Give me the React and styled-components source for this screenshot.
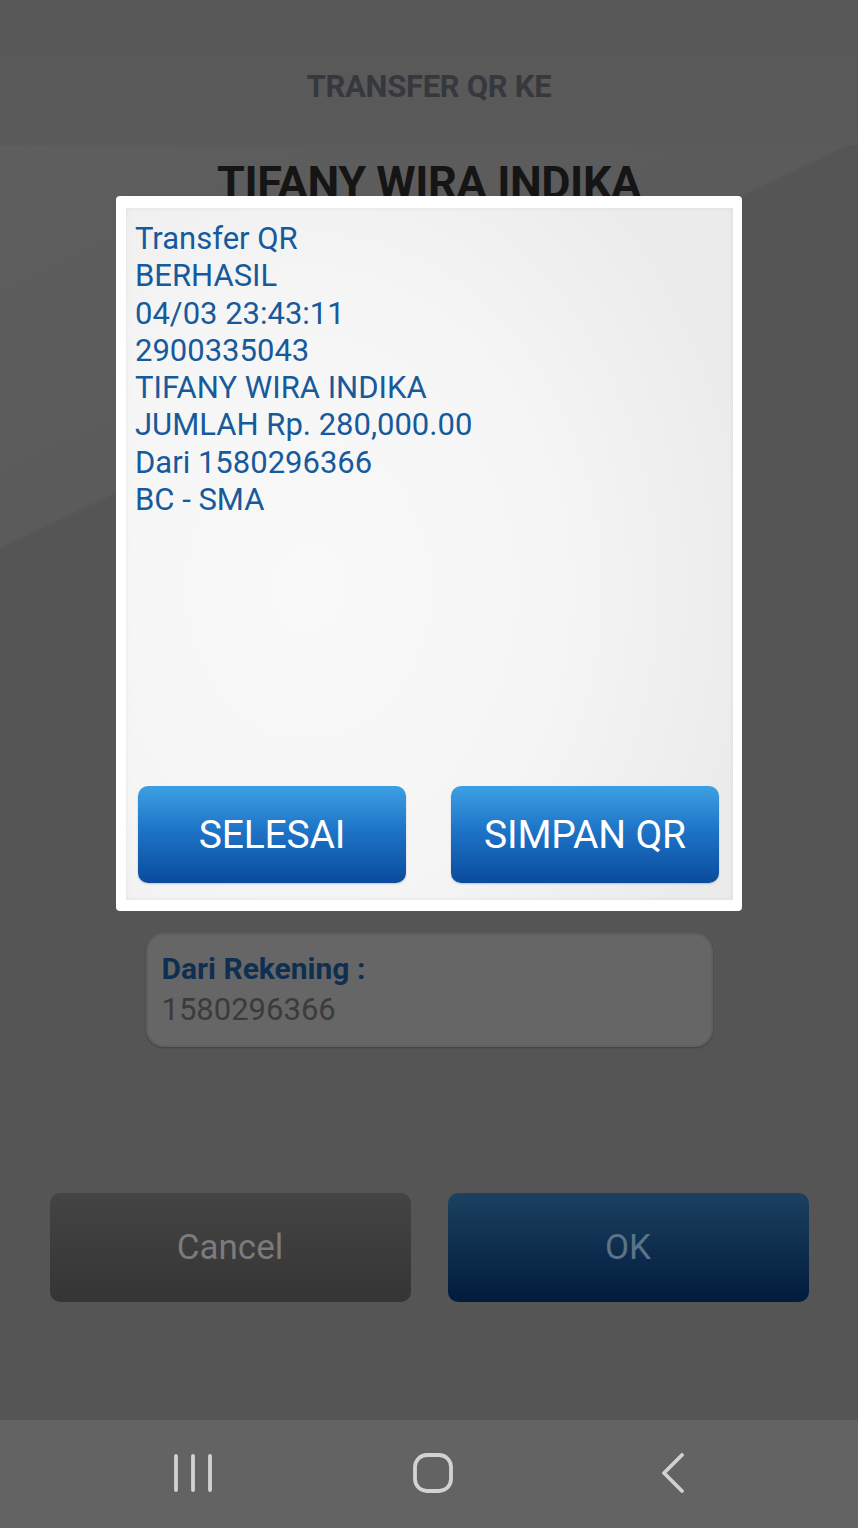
import styled, { createGlobalStyle } from "styled-components";

const GlobalStyle = createGlobalStyle`
  html, body {
    margin: 0;
    padding: 0;
    background: #575757;
  }
  * {
    box-sizing: border-box;
  }
`;

const Screen = styled.div`
  position: relative;
  width: 858px;
  height: 1528px;
  overflow: hidden;
  display: flex;
  flex-direction: column;
  font-family: Roboto, "Noto Sans", sans-serif;
  background: #575757;
`;

const Header = styled.header`
  height: 145px;
  display: flex;
  align-items: center;
  justify-content: center;
  padding-top: 28px;
  background: linear-gradient(#585858, #5a5a5a);
  color: #37383d;
  font-size: 31px;
  font-weight: 700;
  letter-spacing: -0.3px;
`;

const Body = styled.main`
  flex: 1;
  display: flex;
  flex-direction: column;
  align-items: center;
  background: linear-gradient(
    154.6deg,
    #5e5e5e 0%,
    #5b5b5b 23.8%,
    #555555 24.1%,
    #555555 100%
  );
`;

const Name = styled.h1`
  margin: 12px 0 0;
  font-size: 45px;
  font-weight: 700;
  color: #151515;
  letter-spacing: -0.4px;
  line-height: 52px;
`;

const InfoBox = styled.div`
  margin-top: 724px;
  width: 567px;
  height: 114px;
  border-radius: 18px;
  background: #666666;
  border: 2px solid #5f5f5f;
  box-shadow: 0 1px 2px rgba(0, 0, 0, 0.25);
  padding: 14px 0 0 14px;
  display: flex;
  flex-direction: column;
`;

const InfoLabel = styled.div`
  font-size: 30px;
  font-weight: 700;
  color: #0f2f52;
  line-height: 40px;
`;

const InfoValue = styled.div`
  font-size: 31px;
  color: #3b3b3b;
  line-height: 42px;
`;

const ActionRow = styled.div`
  margin-top: 146px;
  display: flex;
  gap: 37px;
`;

const ActionButton = styled.button`
  width: 361px;
  height: 109px;
  border: none;
  border-radius: 10px;
  font-family: inherit;
  font-size: 35px;
  background: ${(p) =>
    p.$primary
      ? "linear-gradient(#1c4160, #011b3d)"
      : "linear-gradient(#444444, #353535)"};
  color: ${(p) => (p.$primary ? "#5b7287" : "#7b7b7b")};
`;

const NavBar = styled.nav`
  height: 108px;
  background: #636363;
  display: grid;
  grid-template-columns: repeat(3, 240px);
  justify-content: center;
  align-items: center;
  justify-items: center;
  padding: 0 0 2px 8px;
`;

const Overlay = styled.div`
  position: absolute;
  inset: 0;
  display: flex;
  justify-content: center;
  align-items: flex-start;
  padding-top: 196px;
`;

const Dialog = styled.div`
  width: 626px;
  height: 715px;
  background: #ffffff;
  border-radius: 4px;
  padding: 12px 9px 11px 10px;
  display: flex;
`;

const Panel = styled.div`
  flex: 1;
  display: flex;
  flex-direction: column;
  justify-content: space-between;
  padding: 12px 14px 17px 9px;
  background: radial-gradient(
    ellipse 75% 80% at 30% 55%,
    #f9f9f9 0%,
    #f5f5f5 55%,
    #ebebeb 100%
  );
  box-shadow: inset 0 0 4px rgba(0, 0, 0, 0.07);
`;

const Message = styled.div`
  font-size: 31px;
  line-height: 37.3px;
  color: #175a9c;
  white-space: pre-line;
`;

const DialogButtons = styled.div`
  display: flex;
  justify-content: space-between;
  padding-left: 3px;
`;

const DialogButton = styled.button`
  width: 268px;
  height: 97px;
  border: none;
  border-radius: 10px;
  background: linear-gradient(#3da0e3 0%, #1e74c7 45%, #0a4b9c 100%);
  box-shadow: 0 1px 2px rgba(0, 0, 0, 0.2);
  color: #ffffff;
  font-family: inherit;
  font-size: 39px;
  letter-spacing: -0.2px;
`;

const lines = [
  "Transfer QR",
  "BERHASIL",
  "04/03 23:43:11",
  "2900335043",
  "TIFANY WIRA INDIKA",
  "JUMLAH Rp. 280,000.00",
  "Dari 1580296366",
  "BC - SMA",
];

function RecentsIcon() {
  return (
    <svg width="40" height="40" viewBox="0 0 40 40" fill="none" stroke="#d2d2d2" strokeWidth="3.8" strokeLinecap="round">
      <path d="M3 3v34M20 3v34M37 3v34" />
    </svg>
  );
}

function HomeIcon() {
  return (
    <svg width="40" height="40" viewBox="0 0 40 40" fill="none" stroke="#d2d2d2" strokeWidth="3.8">
      <rect x="2" y="2" width="36" height="36" rx="12" />
    </svg>
  );
}

function BackIcon() {
  return (
    <svg width="24" height="40" viewBox="0 0 24 40" fill="none" stroke="#d2d2d2" strokeWidth="3.8" strokeLinecap="round" strokeLinejoin="round">
      <path d="M21 2L3 20l18 18" />
    </svg>
  );
}

export default function App() {
  return (
    <Screen>
      <GlobalStyle />
      <Header>TRANSFER QR KE</Header>
      <Body>
        <Name>TIFANY WIRA INDIKA</Name>
        <InfoBox>
          <InfoLabel>Dari Rekening :</InfoLabel>
          <InfoValue>1580296366</InfoValue>
        </InfoBox>
        <ActionRow>
          <ActionButton>Cancel</ActionButton>
          <ActionButton $primary>OK</ActionButton>
        </ActionRow>
      </Body>
      <NavBar>
        <RecentsIcon />
        <HomeIcon />
        <BackIcon />
      </NavBar>

      <Overlay>
        <Dialog>
          <Panel>
            <Message>{lines.join("\n")}</Message>
            <DialogButtons>
              <DialogButton>SELESAI</DialogButton>
              <DialogButton>SIMPAN QR</DialogButton>
            </DialogButtons>
          </Panel>
        </Dialog>
      </Overlay>
    </Screen>
  );
}
